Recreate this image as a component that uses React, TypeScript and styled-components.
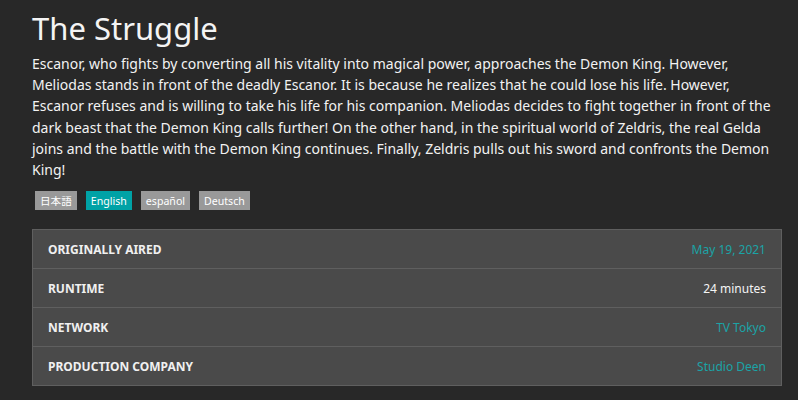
import styled, { createGlobalStyle } from "styled-components";

const GlobalStyle = createGlobalStyle`
  body {
    margin: 0;
    background: #282828;
    font-family: "Noto Sans", "Noto Sans CJK JP", sans-serif;
    color: #f2f2f2;
  }
`;

const Page = styled.div`
  padding: 6px 16px 0 32px;
`;

const Title = styled.h1`
  margin: 0;
  font-size: 31px;
  font-weight: 400;
  line-height: 44px;
  color: #f4f4f4;
`;

const Overview = styled.p`
  margin: 3px 0 0;
  font-size: 14px;
  line-height: 21.2px;
`;

const Tags = styled.div`
  display: flex;
  gap: 9px;
  margin: 11px 0 0 3px;
`;

const Tag = styled.span<{ $active?: boolean }>`
  display: inline-flex;
  align-items: center;
  height: 19px;
  padding: 0 5px;
  font-size: 10.6px;
  color: #fff;
  background: ${(p) => (p.$active ? "#00a2a6" : "#999999")};
`;

const Table = styled.div`
  margin-top: 19px;
  border: 1px solid #5f5f5f;
  background: #4a4a4a;
`;

const Row = styled.div`
  display: flex;
  justify-content: space-between;
  align-items: center;
  height: 38px;
  padding: 0 15px;
  border-top: 1px solid #5f5f5f;
  &:first-child {
    border-top: none;
  }
`;

const Label = styled.span`
  font-size: 12px;
  font-weight: 700;
  color: #f0f0f0;
`;

const Value = styled.span<{ $link?: boolean }>`
  font-size: 12px;
  color: ${(p) => (p.$link ? "#1ba3a6" : "#f4f4f4")};
`;

const rows = [
  { label: "ORIGINALLY AIRED", value: "May 19, 2021", link: true },
  { label: "RUNTIME", value: "24 minutes", link: false },
  { label: "NETWORK", value: "TV Tokyo", link: true },
  { label: "PRODUCTION COMPANY", value: "Studio Deen", link: true },
];

const languages = [
  { name: "日本語", active: false },
  { name: "English", active: true },
  { name: "español", active: false },
  { name: "Deutsch", active: false },
];

export default function App() {
  return (
    <Page>
      <GlobalStyle />
      <Title>The Struggle</Title>
      <Overview>
        Escanor, who fights by converting all his vitality into magical power, approaches the Demon King. However,
        Meliodas stands in front of the deadly Escanor. It is because he realizes that he could lose his life. However,
        Escanor refuses and is willing to take his life for his companion. Meliodas decides to fight together in front of
        the dark beast that the Demon King calls further! On the other hand, in the spiritual world of Zeldris, the real
        Gelda joins and the battle with the Demon King continues. Finally, Zeldris pulls out his sword and confronts the
        Demon King!
      </Overview>
      <Tags>
        {languages.map((l) => (
          <Tag key={l.name} $active={l.active}>
            {l.name}
          </Tag>
        ))}
      </Tags>
      <Table>
        {rows.map((r) => (
          <Row key={r.label}>
            <Label>{r.label}</Label>
            <Value $link={r.link}>{r.value}</Value>
          </Row>
        ))}
      </Table>
    </Page>
  );
}
